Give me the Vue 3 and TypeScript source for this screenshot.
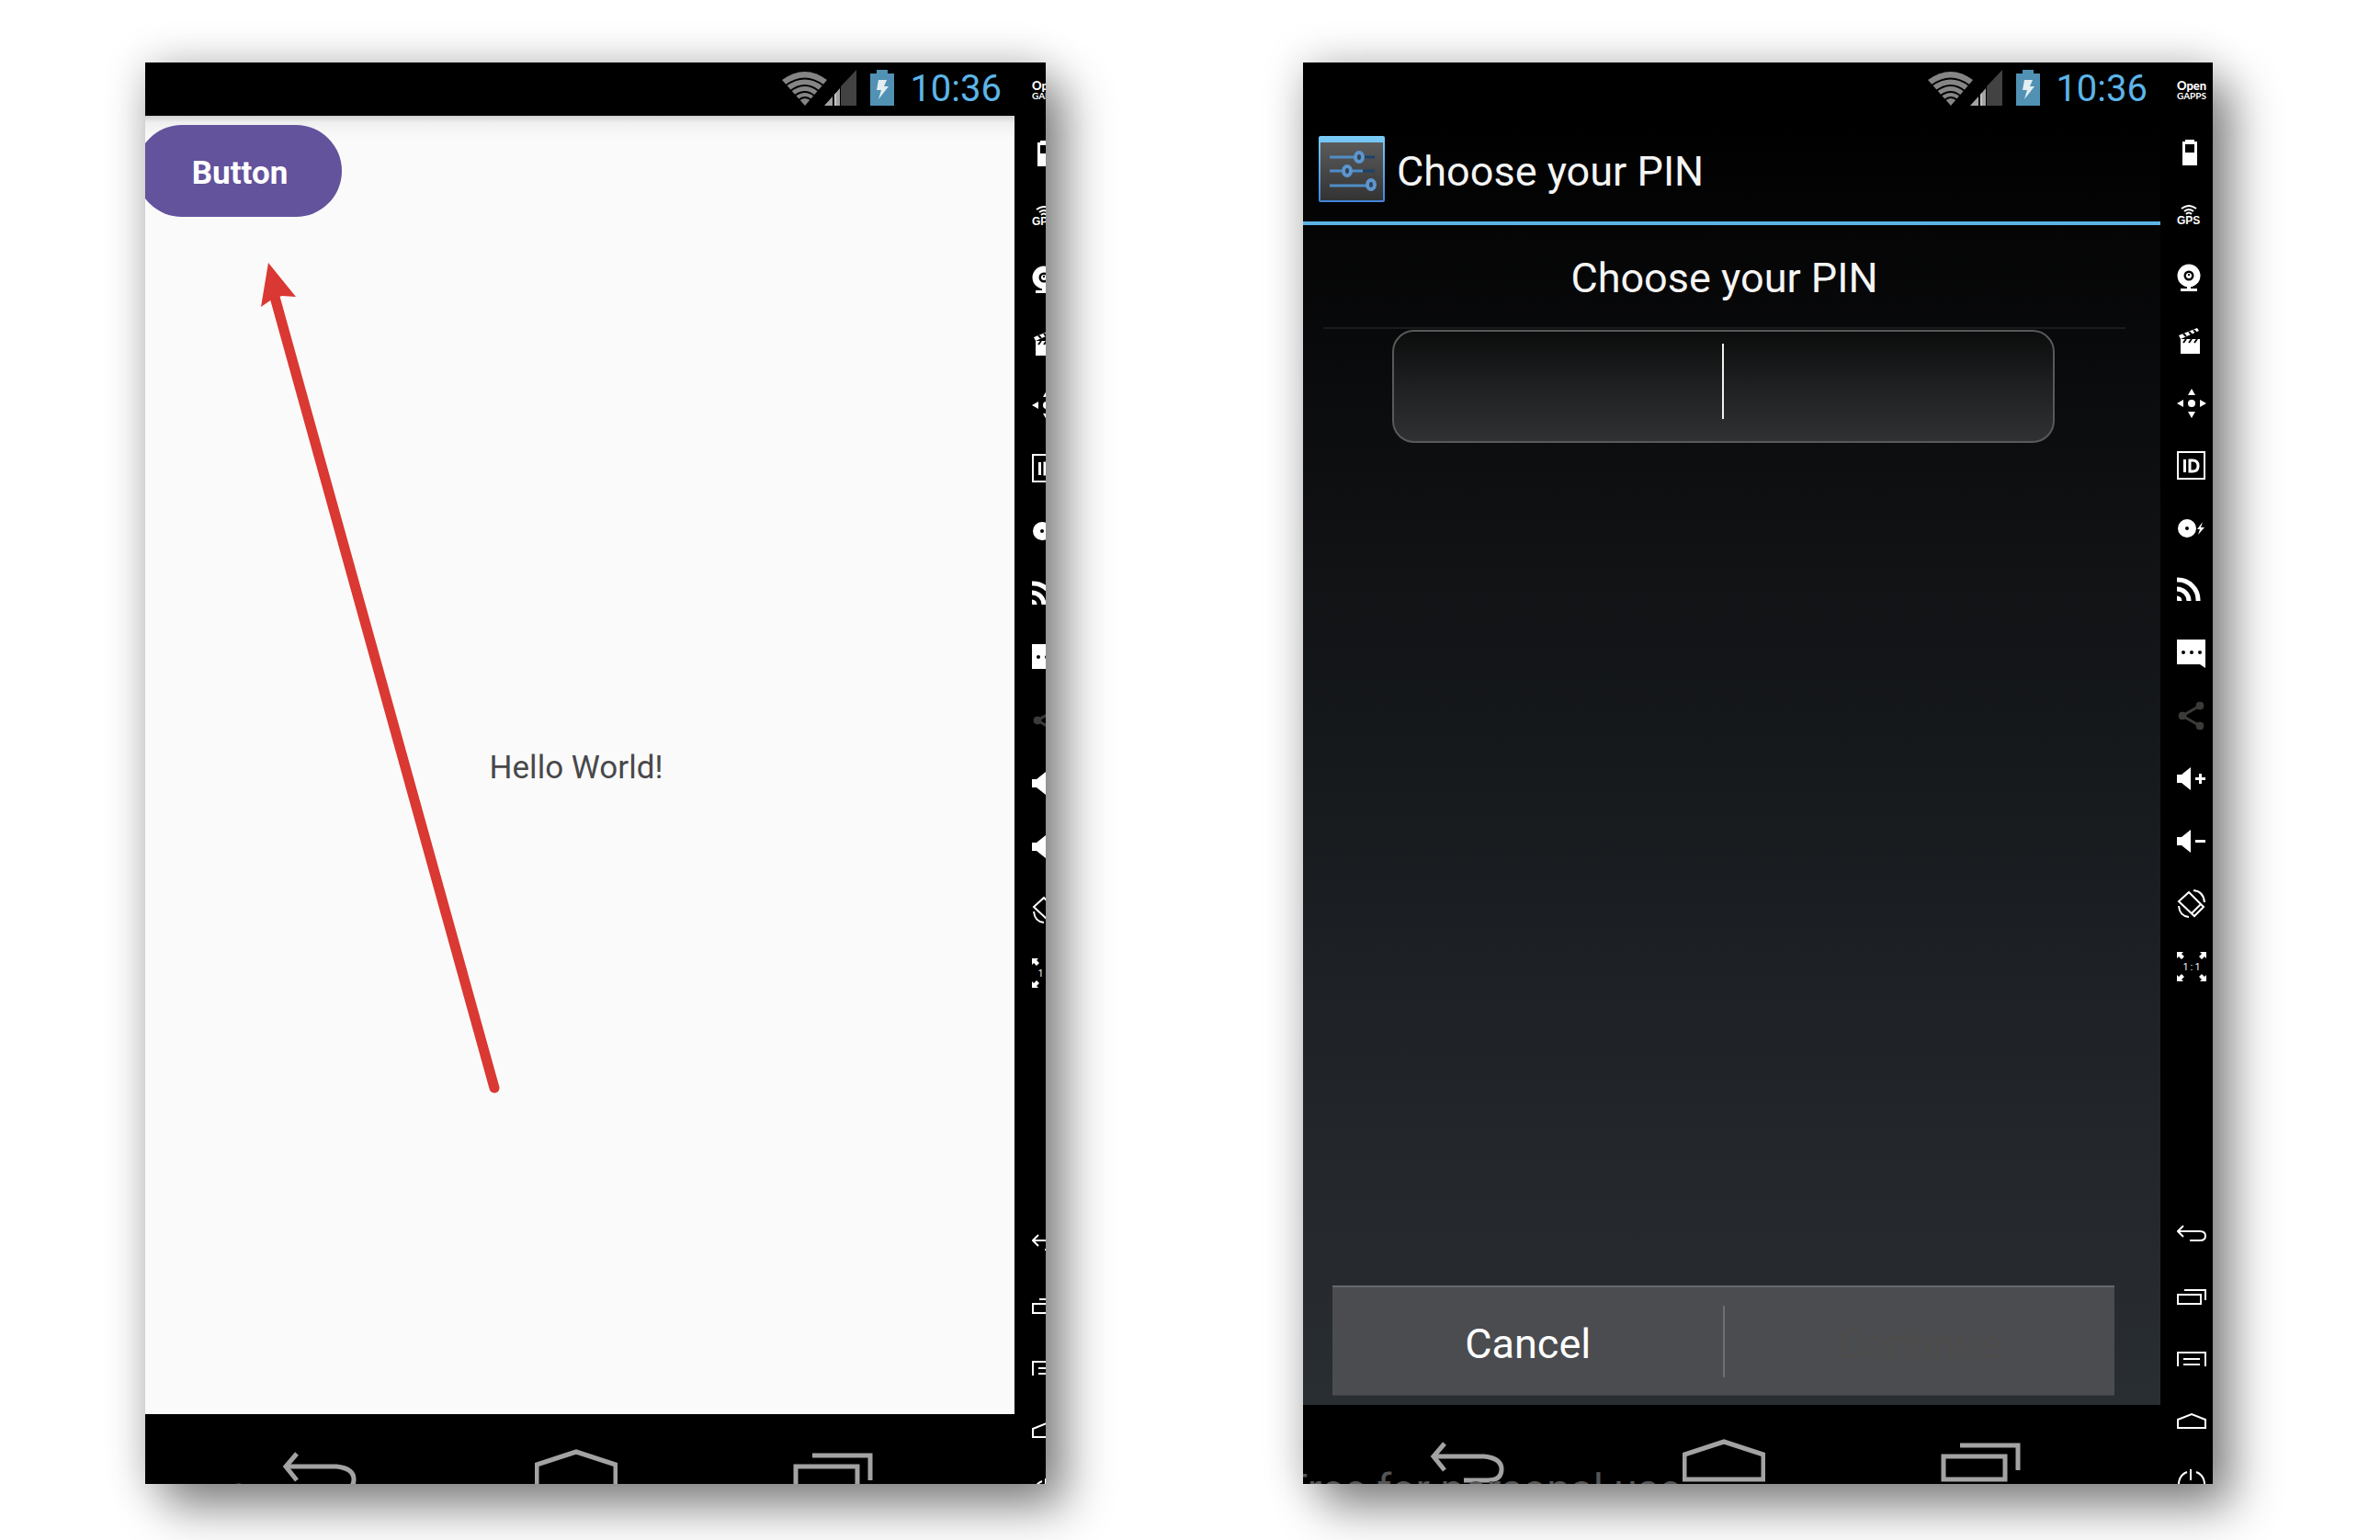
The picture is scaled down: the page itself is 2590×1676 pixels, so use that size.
<script setup lang="ts">
interface Phone {
  id: string
  kind: 'app' | 'pin'
}

const phones: Phone[] = [
  { id: 'left', kind: 'app' },
  { id: 'right', kind: 'pin' },
]

const upperTools: string[] = [
  'gapps', 'battery', 'gps', 'camera', 'capture', 'pad', 'id', 'disk',
  'network', 'sms', 'share', 'volume-up', 'volume-down', 'rotate', 'scale',
]
const lowerTools: string[] = ['back', 'recents', 'menu', 'home', 'power']
const toolGroups = [
  { name: 'upper', tools: upperTools },
  { name: 'lower', tools: lowerTools },
]
</script>

<template>
  <main class="page">
    <section v-for="phone in phones" :key="phone.id" class="phone" :class="phone.kind">
      <div class="device">
        <header class="status">
          <svg class="signals" width="82" height="42" viewBox="0 0 82 42" aria-hidden="true">
            <path d="M0 11Q25-7 49 11L25 39Z" fill="#858585" />
            <g fill="none" stroke="#000" stroke-width="2">
              <path d="M4 17Q25 2 45 17" />
              <path d="M9 23Q25 11 40 23" />
              <path d="M14 28Q25 20 35 28" />
              <path d="M18 33Q25 27 32 33" />
            </g>
            <path d="M64 39V18L81 0V39Z" fill="#424242" />
            <path d="M46 39L55 29V39ZM57 39V27L63 20V39Z" fill="#a3a3a3" />
            <path d="M57 39V27L59 25V39Z" fill="#c4c4c4" />
          </svg>
          <svg class="charge" width="26" height="42" viewBox="0 0 26 42" aria-hidden="true">
            <path d="M0 4H7V0H19V4H26V39H0Z" fill="#5192b4" />
            <path d="M9 11H18L15 18H20L9 32L12 22H7Z" fill="#e3edf2" />
          </svg>
          <time class="clock">10:36</time>
        </header>

        <div v-if="phone.kind === 'app'" class="screen">
          <button type="button" class="pill">Button</button>
          <p class="hello">Hello World!</p>
        </div>

        <form v-else class="screen" @submit.prevent>
          <div class="titlebar">
            <svg width="72" height="72" viewBox="0 0 72 72" aria-hidden="true">
              <defs>
                <linearGradient id="edge" x1="0" y1="0" x2="0" y2="1">
                  <stop offset="0" stop-color="#7accf8" />
                  <stop offset="1" stop-color="#4284d8" />
                </linearGradient>
                <linearGradient id="face" x1="0" y1="0" x2="0" y2="1">
                  <stop offset="0" stop-color="#5b5b5b" />
                  <stop offset="1" stop-color="#333" />
                </linearGradient>
              </defs>
              <rect width="72" height="72" rx="2" fill="url(#edge)" />
              <rect x="2" y="7" width="68" height="63" fill="url(#face)" />
              <g fill="none" stroke-width="3">
                <path d="M49 23H61M35 38H61" stroke="#1f4269" />
                <path d="M12 23H40M12 38H27M36 38H48M12 54H53" stroke="#4f8dc6" />
                <g stroke="#5b96cf" stroke-width="4" fill="#34424f">
                  <ellipse cx="44" cy="23" rx="4" ry="5" />
                  <ellipse cx="31" cy="38" rx="4" ry="5" />
                  <ellipse cx="57" cy="53" rx="4" ry="5" />
                </g>
              </g>
            </svg>
            <h1>Choose your PIN</h1>
          </div>
          <div class="body">
            <label class="prompt" for="pin">Choose your PIN</label>
            <div class="field">
              <input id="pin" type="password" autocomplete="off" />
              <span class="caret"></span>
            </div>
            <div class="actions">
              <button type="button">Cancel</button>
              <button type="submit" disabled>Continue</button>
            </div>
          </div>
        </form>

        <nav class="keys">
          <span class="watermark">Free for personal use</span>
          <button type="button" aria-label="Back">
            <svg width="90" height="50" viewBox="0 0 90 50">
              <path d="M21 5L9 19L21 34" stroke-width="5" />
              <path d="M8 19H64Q83 21 83 33Q83 45 68 45H42" stroke-width="5" />
            </svg>
          </button>
          <button type="button" aria-label="Home">
            <svg width="90" height="50" viewBox="0 0 90 50">
              <path d="M2 44V17L45 3L88 17V44Z" stroke-width="5" />
            </svg>
          </button>
          <button type="button" aria-label="Recent apps">
            <svg width="90" height="50" viewBox="0 0 90 50">
              <path d="M4 19H71V44H4Z" stroke-width="5" />
              <path d="M22 7H85V34" stroke-width="5" />
            </svg>
          </button>
        </nav>
      </div>

      <aside class="rail">
        <div v-for="group in toolGroups" :key="group.name" class="tools" :class="group.name">
          <button v-for="tool in group.tools" :key="tool" type="button" :aria-label="tool">
            <span v-if="tool === 'gapps'" class="gapps"><b>Open</b><span>GAPPS</span></span>
            <span v-else-if="tool === 'gps'" class="gps">
              <svg width="18" height="11" viewBox="0 0 18 11" fill="none" stroke="#fff" stroke-width="2">
                <path d="M1 4Q9-2 17 4M4 7Q9 3 14 7M6 10Q9 7 12 10" />
              </svg>
              <b>GPS</b>
            </span>
            <svg v-else width="32" height="32" viewBox="0 0 32 32" fill="#fff">
              <path v-if="tool === 'battery'" fill-rule="evenodd" d="M9 2H19V4H22V30H6V4H9ZM9 7V16H19V7Z" />
              <template v-else-if="tool === 'camera'">
                <circle cx="13" cy="14" r="9" fill="none" stroke="#fff" stroke-width="7" />
                <circle cx="13" cy="14" r="3" />
                <path d="M11 25H15V28H22V31H4V28H11Z" />
                <path d="M12 12H14V14H12Z" fill="#000" />
              </template>
              <template v-else-if="tool === 'capture'">
                <path d="M4 14H25V30H4Z" />
                <path d="M2 10L22 2L24 5L4 14Z" />
                <path d="M7 8L10 11M13 6L16 9M18 4L21 7M7 18L10 14M13 18L16 14M19 18L22 14" stroke="#000" stroke-width="2" />
              </template>
              <template v-else-if="tool === 'pad'">
                <circle cx="16" cy="16" r="4" />
                <path d="M12 7L16 0L20 7ZM12 25L16 32L20 25ZM7 12L0 16L7 20ZM25 12L32 16L25 20Z" />
              </template>
              <template v-else-if="tool === 'id'">
                <rect x="1" y="1" width="29" height="29" fill="none" stroke="#fff" stroke-width="2" />
                <path d="M7 9H10V23H7Z" />
                <path d="M14 10H17Q23 10 23 16Q23 22 17 22H14Z" fill="none" stroke="#fff" stroke-width="3" />
              </template>
              <template v-else-if="tool === 'disk'">
                <circle cx="11" cy="16" r="6" fill="none" stroke="#fff" stroke-width="8" />
                <path d="M28 9L22 17H25L23 23L30 15H26Z" />
              </template>
              <path
                v-else-if="tool === 'network'" fill="none" stroke="#fff" stroke-width="5"
                d="M0 4A22 22 0 0 1 23 27M0 14A13 13 0 0 1 13 27M0 24A3 3 0 0 1 3 27"
              />
              <template v-else-if="tool === 'sms'">
                <path d="M0 1H31V32L25 28H0Z" />
                <g fill="#000">
                  <circle cx="7" cy="15" r="2" /><circle cx="16" cy="15" r="2" /><circle cx="25" cy="15" r="2" />
                </g>
              </template>
              <g v-else-if="tool === 'share'" fill="#3b3b39" stroke="#3b3b39">
                <path d="M25 5L6 16L25 27" fill="none" stroke-width="3" />
                <circle cx="25" cy="5" r="4" /><circle cx="6" cy="16" r="4" /><circle cx="25" cy="27" r="4" />
              </g>
              <template v-else-if="tool === 'volume-up' || tool === 'volume-down'">
                <path d="M0 11H5L15 3V28L5 20H0Z" />
                <path d="M20 14H31V17H20Z" />
                <path v-if="tool === 'volume-up'" d="M24 10H27V21H24Z" />
              </template>
              <g v-else-if="tool === 'rotate'" fill="none" stroke="#fff" stroke-width="2">
                <path d="M13 3L29 19L19 29L2 13ZM16 26L26 16" />
                <path d="M18 1Q29 2 30 14M2 18Q3 29 13 30" />
              </g>
              <template v-else-if="tool === 'scale'">
                <path d="M0 0H7L5 2L8 5L5 8L2 5L0 7ZM32 0H25L27 2L24 5L27 8L30 5L32 7ZM0 32H7L5 30L8 27L5 24L2 27L0 25ZM32 32H25L27 30L24 27L27 24L30 27L32 25Z" />
                <text x="16" y="20" text-anchor="middle" font-size="10">1 : 1</text>
              </template>
              <g v-else fill="none" stroke="#fff" stroke-width="2">
                <path v-if="tool === 'back'" d="M7 7L1 13L7 19M1 13H25Q31 13 31 18Q31 23 25 23H14" />
                <path v-else-if="tool === 'recents'" d="M1 14H26V24H1ZM8 9H31V20" />
                <path v-else-if="tool === 'menu'" d="M1 24V9H31V24M7 16H25M7 22H25" />
                <path v-else-if="tool === 'home'" d="M1 23V14L16 8L31 14V23Z" />
                <path v-else d="M11 3A14 14 0 1 0 21 3M15 0V12" />
              </g>
            </svg>
          </button>
        </div>
      </aside>

      <svg v-if="phone.kind === 'app'" class="arrow" width="270" height="920" viewBox="0 0 270 920" aria-hidden="true">
        <path d="M17 30L258 898" fill="none" stroke="#da3832" stroke-width="11" stroke-linecap="round" />
        <path d="M12 0L42 37L27 36L17 39L4 48Z" fill="#da3832" />
      </svg>
    </section>
  </main>
</template>

<style>
body {
  margin: 0;
  background: #fff;
}
</style>

<style scoped>
.page {
  box-sizing: border-box;
  display: flex;
  gap: 280px;
  min-height: 100vh;
  padding: 68px 182px 61px 158px;
  overflow: hidden;
  font-family: Roboto, "Liberation Sans", sans-serif;
}

button {
  border: 0;
  padding: 0;
  background: none;
  font-family: inherit;
}

.phone {
  position: relative;
  display: flex;
  min-width: 0;
  background: #000;
  box-shadow: 22px 26px 48px rgba(0, 0, 0, 0.44), 0 0 44px rgba(0, 0, 0, 0.2);
}

.phone.app {
  flex: 980 1 0;
}

.phone.pin {
  flex: 990 1 0;
}

.device {
  display: flex;
  flex: 1;
  flex-direction: column;
  min-width: 0;
}

.status {
  display: flex;
  align-items: center;
  justify-content: flex-end;
  height: 58px;
  padding-right: 14px;
}

.charge {
  margin: 0 17px 0 14px;
}

.clock {
  color: #5cb5e8;
  font-size: 40px;
  line-height: 48px;
}

.screen {
  display: flex;
  flex: 1;
  flex-direction: column;
}

.app .screen {
  position: relative;
  padding-right: 8px;
  overflow: hidden;
  background: linear-gradient(#cfcfcf, #efefef 7px, #f5f5f5 15px, #fafafa 26px);
}

.pill {
  align-self: flex-start;
  width: 224px;
  height: 100px;
  margin: 10px 0 0 -10px;
  padding: 4px 0 0 2px;
  border-radius: 50px;
  background: #63529c;
  color: #fff;
  font-size: 35px;
  font-weight: 700;
}

.hello {
  margin: auto;
  padding-bottom: 104px;
  color: #48484b;
  font-size: 35px;
  line-height: 40px;
}

.arrow {
  position: absolute;
  top: 218px;
  left: 122px;
}

.pin .screen {
  background: linear-gradient(#000, #0e0f11 28%, #16191c 50%, #23262b 80%, #292e32);
}

.titlebar {
  display: flex;
  align-items: center;
  gap: 13px;
  height: 115px;
  padding-left: 17px;
  border-bottom: 4px solid #5cb3e6;
}

h1,
.prompt {
  margin: 0;
  padding-top: 6px;
  color: #f5f5f5;
  font-size: 45px;
  font-weight: 400;
  line-height: 52px;
}

.body {
  display: flex;
  flex: 1;
  flex-direction: column;
  padding: 26px 38px 10px 22px;
}

.prompt {
  padding-bottom: 27px;
  border-bottom: 2px solid #1b1c1e;
  text-align: center;
}

.field {
  position: relative;
  margin: 1px 77px 0 75px;
}

.field input {
  box-sizing: border-box;
  display: block;
  width: 100%;
  height: 123px;
  border: 2px solid #58595a;
  border-radius: 24px;
  outline: 0;
  background: linear-gradient(#0b0c0c, #1f2021 50%, #303133);
  color: #fff;
  font-size: 45px;
  text-align: center;
}

.caret {
  position: absolute;
  top: 15px;
  left: 50%;
  width: 2px;
  height: 82px;
  margin-left: -2px;
  background: #f0f0f0;
}

.actions {
  display: flex;
  height: 117px;
  margin: auto 12px 0 10px;
  border-top: 2px solid #66696c;
  border-bottom: 1px solid #3d4043;
  background: linear-gradient(#6c6f72, #6c6f72) center / 2px 78px no-repeat, #4a4c50;
}

.actions button {
  flex: 1;
  padding-top: 6px;
  color: #fff;
  font-size: 45px;
}

.actions button:disabled {
  color: #4d4c4b;
}

.keys {
  position: relative;
  display: flex;
  justify-content: center;
  gap: 190px;
  height: 76px;
  box-sizing: border-box;
  padding: 38px 8px 0 0;
  overflow: hidden;
}

.pin .keys {
  height: 86px;
  padding: 37px 17px 0 0;
}

.keys button {
  height: 50px;
}

.keys svg {
  display: block;
  fill: none;
  stroke: #a3a3a3;
}

.watermark {
  position: absolute;
  top: 68px;
  left: -12px;
  color: #555;
  font-size: 46px;
  line-height: 54px;
  white-space: nowrap;
}

.pin .watermark {
  top: 65px;
  left: -20px;
}

.rail {
  display: flex;
  flex-direction: column;
  box-sizing: border-box;
  width: 57px;
  padding: 14px 0 0 18px;
  overflow: hidden;
}

.app .rail {
  width: 34px;
  padding-left: 19px;
}

.tools {
  display: flex;
  flex: 986 1 0;
  flex-direction: column;
  justify-content: space-between;
  min-height: 0;
}

.app .tools {
  flex-grow: 992;
}

.tools.lower {
  flex-grow: 288;
  justify-content: flex-start;
  gap: 36px;
  margin-top: 259px;
}

.app .tools.lower {
  flex-grow: 278;
  margin-top: 262px;
}

.tools button {
  display: flex;
  align-items: center;
  flex: none;
  width: 32px;
  height: 32px;
  color: #fff;
}

.tools svg {
  flex: none;
}

.gapps,
.gps {
  display: flex;
  flex-direction: column;
  align-items: flex-start;
  font-size: 10px;
  line-height: 10px;
}

.gapps {
  font-family: Lato, sans-serif;
  font-weight: 700;
}

.gapps b {
  font-size: 13px;
  line-height: 11px;
}

.gps b {
  font-family: "Liberation Sans", sans-serif;
  font-size: 12px;
  line-height: 12px;
}

.gps svg {
  margin-left: 4px;
}
</style>
